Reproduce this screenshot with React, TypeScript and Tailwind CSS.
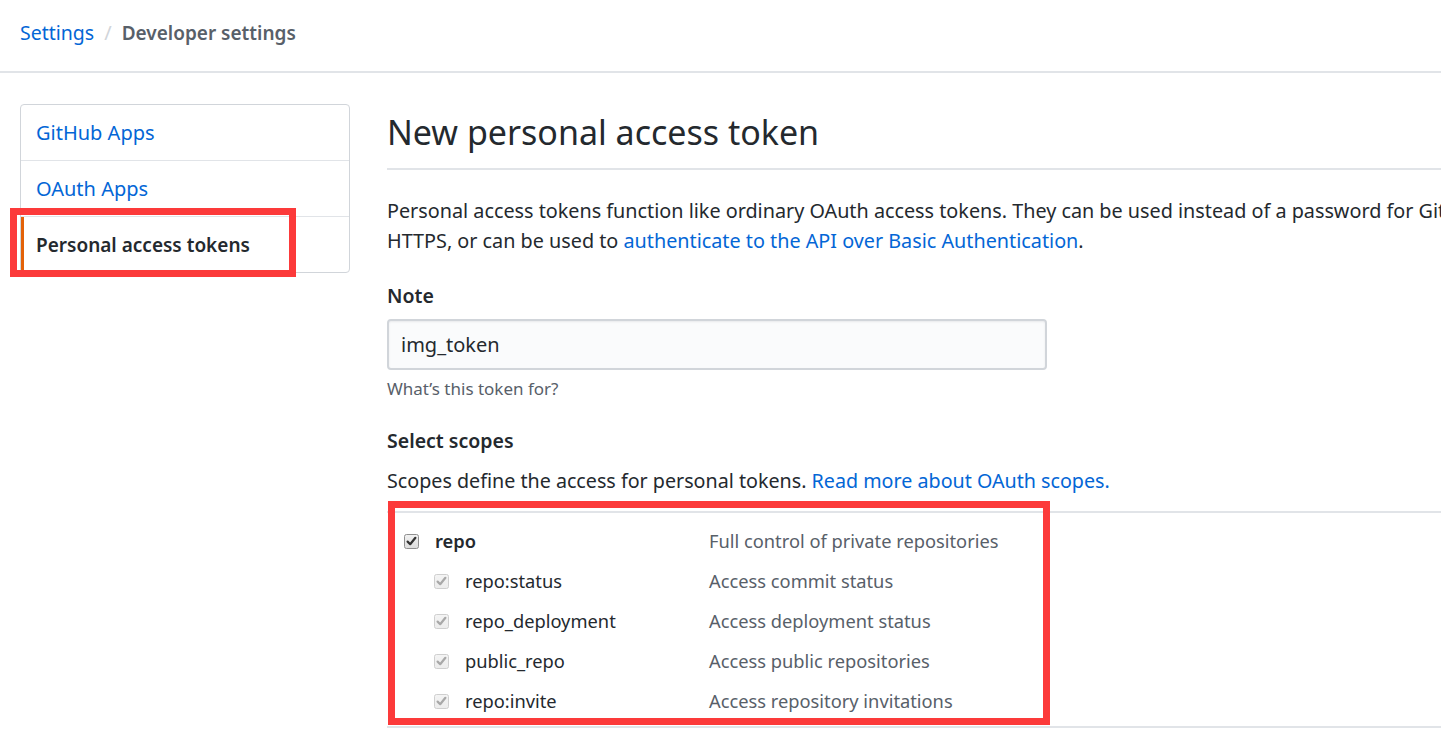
import React from "react";

function Check({ disabled }: { disabled?: boolean }) {
  return (
    <svg width="15" height="15" viewBox="0 0 15 15" className="shrink-0">
      <defs>
        <linearGradient id={disabled ? "gd" : "ge"} x1="0" y1="0" x2="0" y2="1">
          <stop offset="0" stopColor={disabled ? "#f4f4f4" : "#f2f2f2"} />
          <stop offset="1" stopColor={disabled ? "#ececec" : "#dcdcdc"} />
        </linearGradient>
      </defs>
      <rect x="0.5" y="0.5" width="14" height="14" rx="2" fill={`url(#${disabled ? "gd" : "ge"})`} stroke={disabled ? "#cfcfcf" : "#8f8f8f"} />
      <path d="M3.6 7.6 L6.2 10.2 L11.4 3.8" fill="none" stroke={disabled ? "#a8a8a8" : "#333333"} strokeWidth="2.2" strokeLinecap="round" strokeLinejoin="round" />
    </svg>
  );
}

const rows = [
  { name: "repo:status", desc: "Access commit status" },
  { name: "repo_deployment", desc: "Access deployment status" },
  { name: "public_repo", desc: "Access public repositories" },
  { name: "repo:invite", desc: "Access repository invitations" },
];

export default function App() {
  return (
    <div
      className="w-[1441px] h-[731px] overflow-hidden bg-white text-[#24292e]"
      style={{ fontFamily: '"Noto Sans", "Open Sans", sans-serif' }}
    >
      <div className="h-[73px] border-b-2 border-[#e1e4e8] pl-[20px] pt-[18px] text-[20px] leading-[30px] flex">
        <span className="text-[#0366d6] text-[19.5px]">Settings</span>
        <span className="text-[#d1d5da] mx-[10px]">/</span>
        <span className="text-[#586069] font-semibold text-[19px]">Developer settings</span>
      </div>

      <div className="flex pt-[31px]">
        <div className="ml-[20px] w-[330px] shrink-0 relative">
          <div className="border border-[#d1d5da] rounded-[4px] text-[20px]">
            <div className="h-[56px] flex items-center pl-[15px] border-b border-[#e1e4e8] text-[#0366d6]">
              GitHub Apps
            </div>
            <div className="h-[56px] flex items-center pl-[15px] border-b border-[#e1e4e8] text-[#0366d6]">
              OAuth Apps
            </div>
            <div className="h-[55px] flex items-center pl-[12px] pt-[1px] border-l-[3px] border-[#e36209] font-semibold text-[19px] text-[#24292e]">
              Personal access tokens
            </div>
          </div>
          <div className="absolute left-[-10px] top-[104px] w-[286px] h-[69px] border-[7px] border-[#fc3a3a]" />
        </div>

        <div className="ml-[37px] w-[1200px] shrink-0">
          <div className="pt-[4px] pb-[12px] border-b-2 border-[#e1e4e8]">
            <h2 className="text-[34px] leading-[48px] font-normal">New personal access token</h2>
          </div>

          <p className="mt-[26px] text-[19.8px] leading-[30px] whitespace-nowrap">
            Personal access tokens function like ordinary OAuth access tokens. They can be used instead of a password for Git
            <br />
            HTTPS, or can be used to <span className="text-[#0366d6]">authenticate to the API over Basic Authentication</span>.
          </p>

          <div className="mt-[25px] text-[19.5px] leading-[30px] font-semibold">Note</div>
          <div className="mt-[8px] w-[660px] h-[51px] rounded-[4px] border-2 border-[#d1d5da] bg-[#fafbfc] shadow-[inset_0_1px_2px_rgba(27,31,35,0.075)] flex items-center pl-[12px] text-[20px]">
            img_token
          </div>
          <div className="mt-[7px] text-[17px] leading-[24px] text-[#586069]">What’s this token for?</div>

          <div className="mt-[25px] text-[19.5px] leading-[30px] font-semibold">Select scopes</div>
          <div className="mt-[10px] text-[19.7px] leading-[30px] whitespace-nowrap">
            Scopes define the access for personal tokens.{" "}
            <span className="text-[#0366d6]">Read more about OAuth scopes.</span>
          </div>

          <div className="relative mt-[15px] border-t-2 border-b-2 border-[#e1e4e8] pt-[8px] pb-[5px] text-[18.3px]">
            <div className="h-[40px] flex items-center">
              <div className="w-[322px] shrink-0 flex items-center pl-[17px] gap-[16px]">
                <Check />
                <span className="font-semibold">repo</span>
              </div>
              <span className="text-[#586069]">Full control of private repositories</span>
            </div>
            {rows.map((r) => (
              <div key={r.name} className="h-[40px] flex items-center">
                <div className="w-[322px] shrink-0 flex items-center pl-[47px] gap-[16px]">
                  <Check disabled />
                  <span>{r.name}</span>
                </div>
                <span className="text-[#586069]">{r.desc}</span>
              </div>
            ))}
            <div className="absolute left-[1px] top-[-12px] w-[662px] h-[224px] border-[7px] border-[#fc3a3a]" />
          </div>
        </div>
      </div>
    </div>
  );
}
